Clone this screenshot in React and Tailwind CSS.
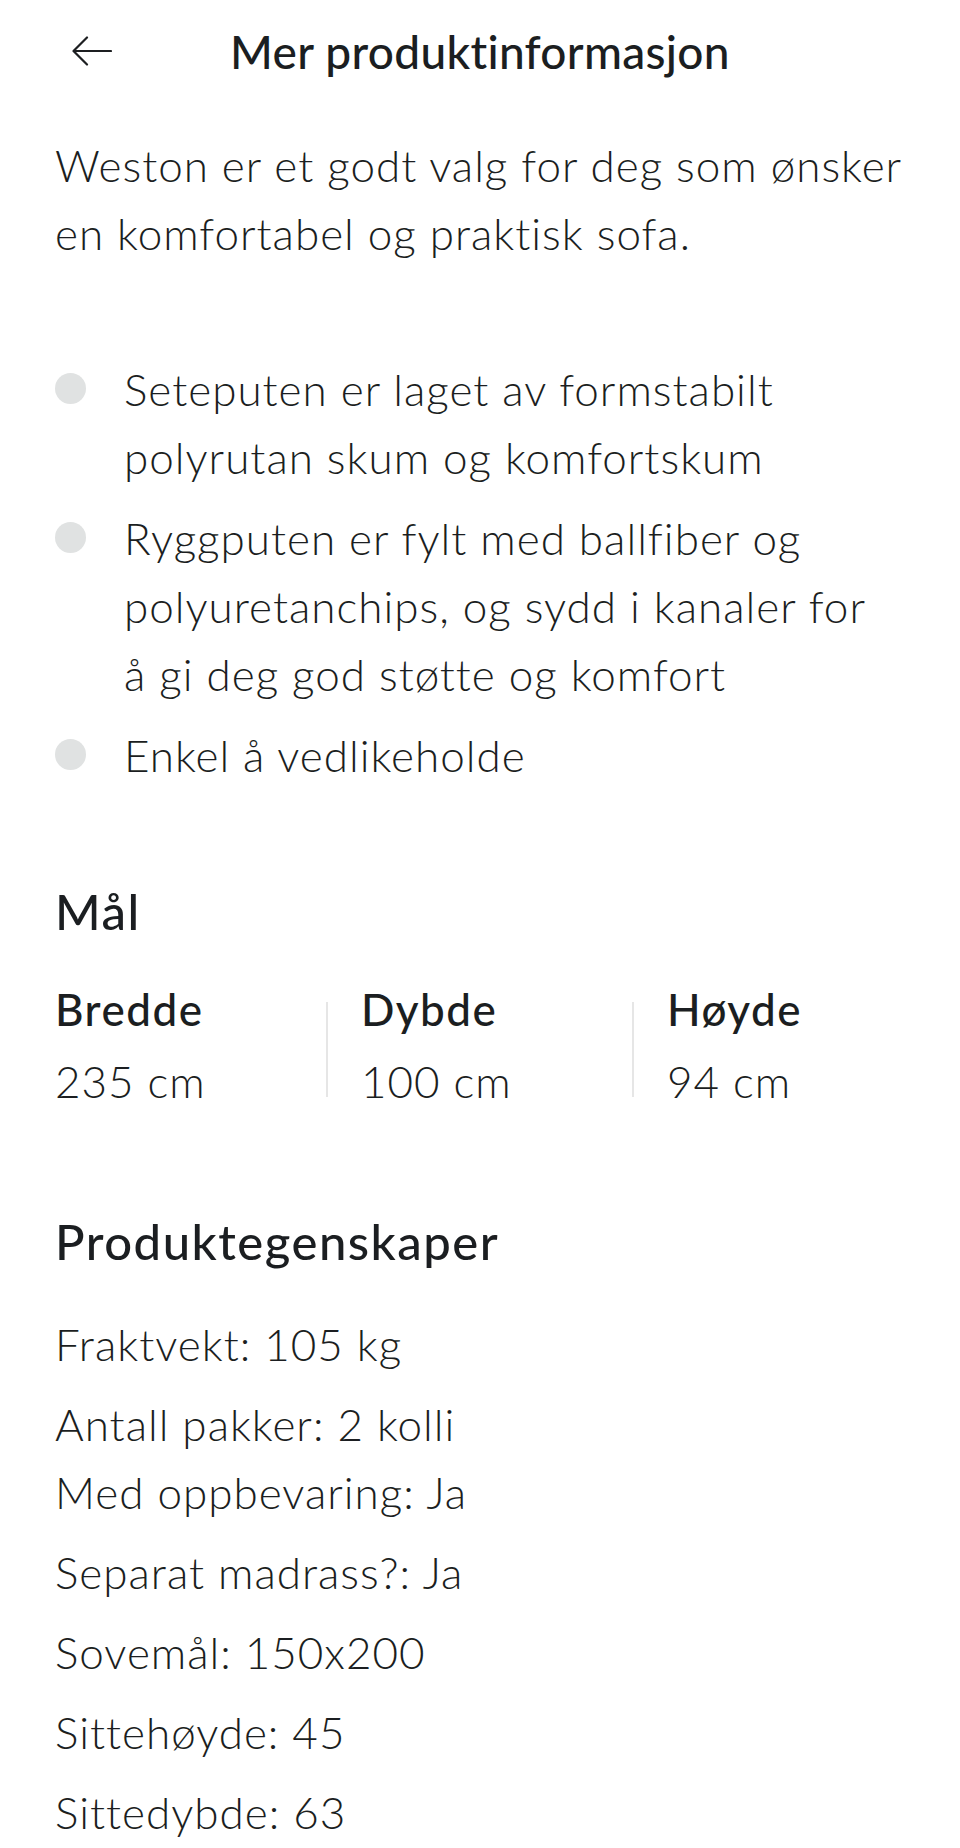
const intro = ["Weston er et godt valg for deg som ønsker", "en komfortabel og praktisk sofa."];

const bullets = [
  ["Seteputen er laget av formstabilt", "polyrutan skum og komfortskum"],
  [
    "Ryggputen er fylt med ballfiber og",
    "polyuretanchips, og sydd i kanaler for",
    "å gi deg god støtte og komfort",
  ],
  ["Enkel å vedlikeholde"],
];

const dims = [
  ["Bredde", "235 cm"],
  ["Dybde", "100 cm"],
  ["Høyde", "94 cm"],
];

const props = [
  ["Fraktvekt: 105 kg"],
  ["Antall pakker: 2 kolli", "Med oppbevaring: Ja"],
  ["Separat madrass?: Ja"],
  ["Sovemål: 150x200"],
  ["Sittehøyde: 45"],
  ["Sittedybde: 63"],
];

const body = "text-[44px] font-light leading-[68px] tracking-[1px] whitespace-nowrap";

function BackArrow() {
  return (
    <svg width="40" height="30" viewBox="0 0 40 30" fill="none">
      <path
        d="M39 15H2M15 1.5L1.5 15L15 28.5"
        stroke="#1d1f21"
        strokeWidth="2.2"
        strokeLinecap="round"
        strokeLinejoin="round"
      />
    </svg>
  );
}

export default function App() {
  return (
    <div
      className="min-h-screen bg-white text-[#1b1e21]"
      style={{ fontFamily: "Lato, 'Noto Sans', sans-serif" }}
    >
      {/* header */}
      <div className="grid grid-cols-[1fr_auto_1fr] items-center h-[102px] pl-[72px] pr-[72px]">
        <button className="justify-self-start">
          <BackArrow />
        </button>
        <h1 className="text-[46px] font-medium tracking-[0.3px]">
          Mer produktinformasjon
        </h1>
        <div />
      </div>

      <div className="px-[55px]">
        <p className={"mt-[29px] " + body}>
          {intro.map((l) => (
            <span key={l} className="block">{l}</span>
          ))}
        </p>

        <ul className="mt-[88px] space-y-[13px]">
          {bullets.map((b) => (
            <li key={b[0]} className="flex">
              <span className="shrink-0 w-[31px] h-[31px] mt-[18px] rounded-full bg-[#e0e2e2]" />
              <span className={"ml-[38px] " + body}>
                {b.map((l) => (
                  <span key={l} className="block">{l}</span>
                ))}
              </span>
            </li>
          ))}
        </ul>

        {/* Mål */}
        <h2 className="mt-[88px] text-[49px] font-medium leading-[68px] tracking-[1.5px]">
          Mål
        </h2>
        <div className="mt-[30px] flex">
          {dims.map(([label, value], i) => (
            <div key={label} className="flex">
              {i > 0 && <div className="w-[2px] h-[95px] mt-[27px] bg-[#e6e6e6]" />}
              <div className={i === 0 ? "w-[271px]" : i === 1 ? "w-[304px] pl-[33px]" : "pl-[33px]"}>
                <div className="text-[44px] font-medium leading-[68px] tracking-[1.5px]">
                  {label}
                </div>
                <div className={"mt-[4px] " + body}>{value}</div>
              </div>
            </div>
          ))}
        </div>

        {/* Produktegenskaper */}
        <h2 className="mt-[92px] text-[49px] font-medium leading-[68px] tracking-[1.5px]">
          Produktegenskaper
        </h2>
        <div className="mt-[35px] space-y-[12px]">
          {props.map((lines) => (
            <div key={lines[0]} className={body}>
              {lines.map((l) => (
                <div key={l}>{l}</div>
              ))}
            </div>
          ))}
        </div>
      </div>
    </div>
  );
}
